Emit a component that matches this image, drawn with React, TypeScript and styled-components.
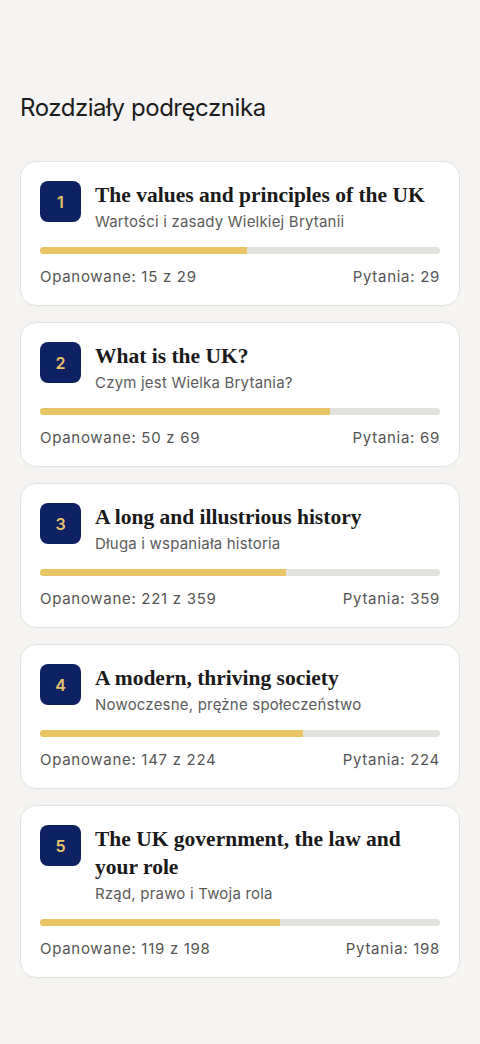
import React from 'react';
import styled, {createGlobalStyle} from 'styled-components';

const GlobalStyle = createGlobalStyle`
  html, body {
    margin: 0;
    padding: 0;
    background: #f5f4f2;
  }
  body {
    font-family: Inter, "Noto Sans", sans-serif;
    color: #1b1b1b;
  }
`;

interface Chapter {
  num: number;
  title: string;
  subtitle: string;
  mastered: number;
  total: number;
}

const chapters: Chapter[] = [
  {num: 1, title: 'The values and principles of the UK', subtitle: 'Wartości i zasady Wielkiej Brytanii', mastered: 15, total: 29},
  {num: 2, title: 'What is the UK?', subtitle: 'Czym jest Wielka Brytania?', mastered: 50, total: 69},
  {num: 3, title: 'A long and illustrious history', subtitle: 'Długa i wspaniała historia', mastered: 221, total: 359},
  {num: 4, title: 'A modern, thriving society', subtitle: 'Nowoczesne, prężne społeczeństwo', mastered: 147, total: 224},
  {num: 5, title: 'The UK government, the law and your role', subtitle: 'Rząd, prawo i Twoja rola', mastered: 119, total: 198},
];

const Page = styled.div`
  padding: 92px 20px 40px;
  min-height: 1044px;
  box-sizing: border-box;
`;

const Heading = styled.h1`
  margin: 0 0 37px;
  font-size: 24px;
  line-height: 32px;
  font-weight: 400;
  letter-spacing: -0.45px;
  color: #1c1c1c;
`;

const List = styled.div`
  display: flex;
  flex-direction: column;
  gap: 16px;
`;

const Card = styled.div`
  background: #ffffff;
  border: 1px solid #e4e2de;
  border-radius: 16px;
  padding: 19px 19px 18px;
`;

const Header = styled.div`
  display: flex;
  gap: 15px;
  align-items: flex-start;
`;

const Badge = styled.div`
  flex: none;
  width: 41px;
  height: 41px;
  border-radius: 8px;
  background: #0e2263;
  color: #e6c36a;
  display: flex;
  align-items: center;
  justify-content: center;
  font-size: 16px;
  font-weight: 600;
`;

const Texts = styled.div`
  display: flex;
  flex-direction: column;
  min-width: 0;
  margin-left: -1px;
`;

const Title = styled.div`
  font-family: "Liberation Serif", "DejaVu Serif", serif;
  font-weight: 700;
  font-size: 21.5px;
  line-height: 28px;
  color: #1a1a1a;
`;

const Subtitle = styled.div`
  margin-top: 3px;
  font-size: 15px;
  line-height: 20px;
  color: #5c5c5c;
  letter-spacing: 0.2px;
`;

const Track = styled.div`
  margin-top: 15px;
  height: 7px;
  border-radius: 4px;
  background: #e3e2de;
  overflow: hidden;
`;

const Fill = styled.div`
  height: 100%;
  background: #e8c462;
`;

const Footer = styled.div`
  margin-top: 13px;
  display: flex;
  justify-content: space-between;
  font-size: 15px;
  line-height: 20px;
  color: #555555;
  letter-spacing: 0.7px;
`;

function ChapterCard({chapter}: {chapter: Chapter}) {
  const pct = (chapter.mastered / chapter.total) * 100;
  return (
    <Card>
      <Header>
        <Badge>{chapter.num}</Badge>
        <Texts>
          <Title>{chapter.title}</Title>
          <Subtitle>{chapter.subtitle}</Subtitle>
        </Texts>
      </Header>
      <Track>
        <Fill style={{width: `${pct}%`}}/>
      </Track>
      <Footer>
        <span>Opanowane: {chapter.mastered} z {chapter.total}</span>
        <span>Pytania: {chapter.total}</span>
      </Footer>
    </Card>
  );
}

export default function App() {
  return (
    <Page>
      <GlobalStyle/>
      <Heading>Rozdziały podręcznika</Heading>
      <List>
        {chapters.map(c => <ChapterCard key={c.num} chapter={c}/>)}
      </List>
    </Page>
  );
}
